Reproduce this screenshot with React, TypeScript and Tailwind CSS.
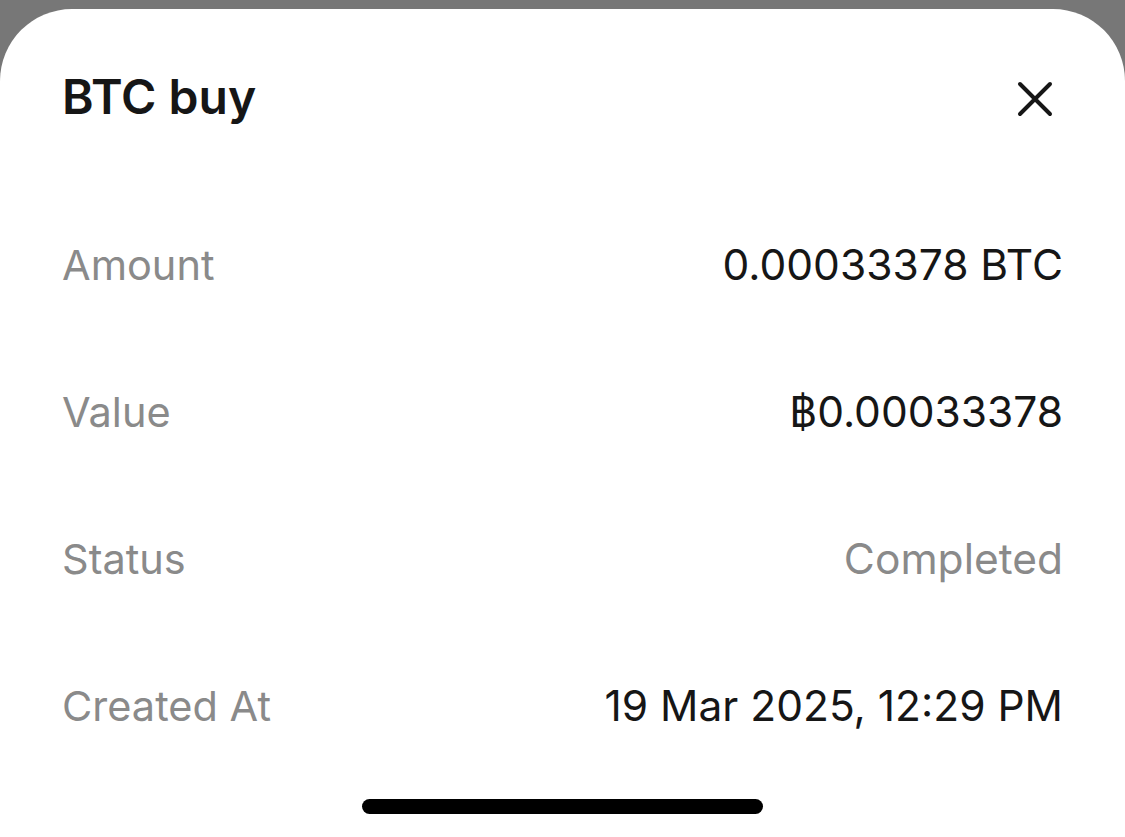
import React from "react";

const rows: { label: string; value: string; muted?: boolean }[] = [
  { label: "Amount", value: "0.00033378 BTC" },
  { label: "Value", value: "฿0.00033378" },
  { label: "Status", value: "Completed", muted: true },
  { label: "Created At", value: "19 Mar 2025, 12:29 PM" },
];

export default function App() {
  return (
    <div
      className="w-[1125px] h-[837px] bg-[#777777] flex flex-col overflow-hidden"
      style={{ fontFamily: "Inter, 'Noto Sans', 'DejaVu Sans', sans-serif" }}
    >
      <div className="h-[9px] shrink-0" />
      <div className="flex-1 bg-white rounded-t-[72px] pl-[62px] pr-[62px] pt-[66px] flex flex-col">
        <div className="flex items-center justify-between h-[44px]">
          <h1 className="text-[48px] leading-[44px] font-semibold text-[#161616]">
            BTC buy
          </h1>
          <svg width="36" height="36" viewBox="0 0 36 36" className="mr-[10px] mt-[4px]">
            <path d="M3 3 L33 33 M33 3 L3 33" stroke="#161616" strokeWidth="4" strokeLinecap="round" />
          </svg>
        </div>
        <div className="mt-[124px] flex flex-col gap-[103px]">
          {rows.map((r) => (
            <div key={r.label} className="flex items-center justify-between h-[44px]">
              <span className="text-[41.5px] leading-[44px] text-[#8a8a8a]">{r.label}</span>
              <span
                className={
                  "text-[42.5px] leading-[44px] " + (r.muted ? "text-[#8a8a8a]" : "text-[#161616]")
                }
              >
                {r.value}
              </span>
            </div>
          ))}
        </div>
        <div className="flex justify-center mt-[71px]">
          <div className="w-[401px] h-[15px] rounded-full bg-black" />
        </div>
      </div>
    </div>
  );
}
